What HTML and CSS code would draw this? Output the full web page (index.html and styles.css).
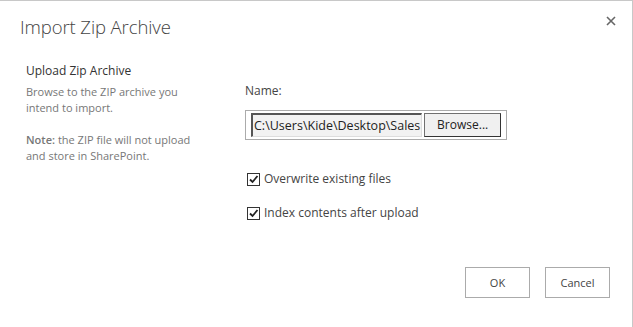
FILE: index.html
```html
<!DOCTYPE html>
<html>
<head>
<meta charset="utf-8">
<link rel="stylesheet" href="styles.css">
</head>
<body>
<div class="dialog">
  <div class="header">
    <h1 class="title">Import Zip Archive</h1>
    <button class="close" aria-label="Close">
      <svg width="10" height="10" viewBox="0 0 10 10"><path d="M1 1L9 9M9 1L1 9" stroke="#666" stroke-width="1.6" fill="none"/></svg>
    </button>
  </div>
  <div class="content">
    <div class="side">
      <h2 class="section">Upload Zip Archive</h2>
      <p class="desc">Browse to the ZIP archive you intend to import.</p>
      <p class="desc"><span class="strong">Note:</span> the ZIP file will not upload and store in SharePoint.</p>
    </div>
    <div class="main">
      <div class="label">Name:</div>
      <div class="file">
        <div class="path">C:\Users\Kide\Desktop\Sales</div>
        <div class="browse">Browse...</div>
      </div>
      <div class="checks">
        <label class="check"><span class="box"><svg width="11" height="11" viewBox="0 0 11 11"><path d="M2 5.5L4.5 8L9.5 2" stroke="#222" stroke-width="1.8" fill="none"/></svg></span>Overwrite existing files</label>
        <label class="check"><span class="box"><svg width="11" height="11" viewBox="0 0 11 11"><path d="M2 5.5L4.5 8L9.5 2" stroke="#222" stroke-width="1.8" fill="none"/></svg></span>Index contents after upload</label>
      </div>
    </div>
  </div>
  <div class="footer">
    <button class="btn">OK</button>
    <button class="btn">Cancel</button>
  </div>
</div>
</body>
</html>
```
FILE: styles.css
```css
html, body {
  margin: 0;
  padding: 0;
  background: #fff;
}
body {
  font-family: "Open Sans", "Noto Sans", sans-serif;
  color: #444;
}
.dialog {
  box-sizing: border-box;
  width: 633px;
  height: 327px;
  border-top: 1px solid #c8c8c8;
  border-right: 1px solid #c8c8c8;
  display: flex;
  flex-direction: column;
}
.header {
  display: flex;
  justify-content: space-between;
  align-items: flex-start;
  padding: 13px 16px 0 20px;
}
.title {
  margin: 0;
  font-size: 18.5px;
  font-weight: 300;
  color: #444;
  line-height: 26px;
  letter-spacing: -0.1px;
}
.close {
  border: 0;
  background: none;
  padding: 0;
  margin-top: 2px;
  width: 10px;
  height: 10px;
  display: flex;
}
.content {
  display: grid;
  grid-template-columns: 219px 1fr;
  padding: 23px 0 0 26px;
}
.section {
  margin: 0 0 5px;
  font-size: 12px;
  font-weight: 400;
  color: #333;
  line-height: 16px;
}
.desc {
  margin: 0 0 16px;
  font-size: 11px;
  line-height: 16px;
  color: #777;
  width: 170px;
}
.strong {
  font-weight: 600;
}
.main {
  padding-top: 20px;
}
.label {
  font-size: 12px;
  line-height: 16px;
  color: #444;
  margin-bottom: 11px;
}
.file {
  box-sizing: border-box;
  width: 262px;
  height: 30px;
  border: 1px solid #ababab;
  display: flex;
  align-items: center;
  padding: 0 5px;
  gap: 2px;
}
.path {
  box-sizing: border-box;
  width: 172px;
  height: 24px;
  background: #f2f2f2;
  border-top: 2px solid #555;
  border-left: 2px solid #555;
  border-right: 1px solid #ddd;
  border-bottom: 1px solid #ddd;
  font-size: 12.5px;
  line-height: 21px;
  color: #222;
  padding-left: 1px;
  overflow: hidden;
  white-space: nowrap;
}
.browse {
  box-sizing: border-box;
  width: 77px;
  height: 24px;
  background: #f0f0f0;
  border: 1px solid #707070;
  border-right-color: #333;
  border-bottom-color: #333;
  font-size: 12px;
  line-height: 22px;
  text-align: center;
  color: #222;
}
.checks {
  display: flex;
  flex-direction: column;
  gap: 18px;
  margin-top: 31px;
}
.check {
  display: flex;
  align-items: center;
  font-size: 12px;
  line-height: 16px;
  color: #444;
  margin-left: 2px;
}
.box {
  box-sizing: border-box;
  width: 13px;
  height: 13px;
  border: 1px solid #333;
  margin-right: 4px;
  display: flex;
  align-items: center;
  justify-content: center;
  background: #fff;
}
.footer {
  margin-top: auto;
  display: flex;
  justify-content: flex-end;
  gap: 15px;
  padding: 0 22px 29px 0;
}
.btn {
  box-sizing: border-box;
  width: 65px;
  height: 31px;
  border: 1px solid #ababab;
  background: #fff;
  font-family: inherit;
  font-size: 11px;
  color: #444;
  padding: 0;
}
```
